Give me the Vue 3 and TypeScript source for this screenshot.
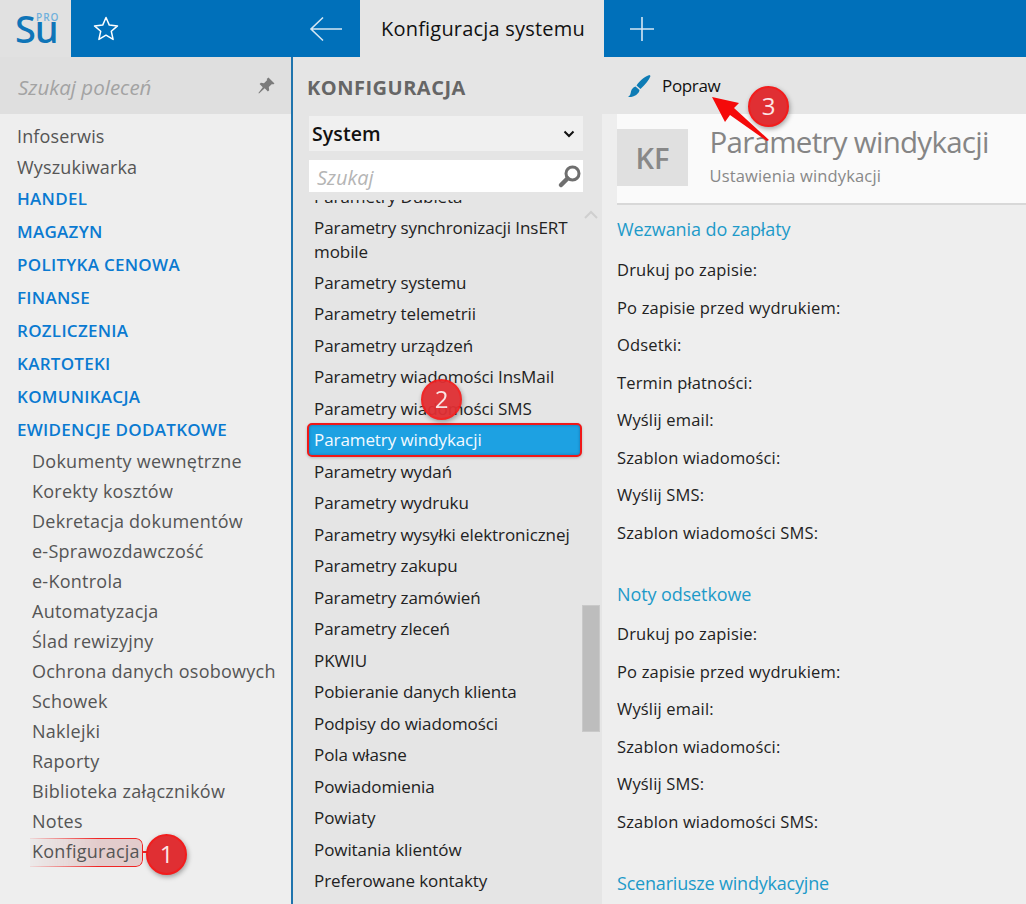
<script setup lang="ts">
const topItems = ['Infoserwis', 'Wyszukiwarka']
const groups = ['HANDEL', 'MAGAZYN', 'POLITYKA CENOWA', 'FINANSE', 'ROZLICZENIA', 'KARTOTEKI', 'KOMUNIKACJA', 'EWIDENCJE DODATKOWE']
const subItems = ['Dokumenty wewnętrzne', 'Korekty kosztów', 'Dekretacja dokumentów', 'e-Sprawozdawczość', 'e-Kontrola', 'Automatyzacja', 'Ślad rewizyjny', 'Ochrona danych osobowych', 'Schowek', 'Naklejki', 'Raporty', 'Biblioteka załączników', 'Notes']
const params = ['Parametry synchronizacji InsERT mobile', 'Parametry systemu', 'Parametry telemetrii', 'Parametry urządzeń', 'Parametry wiadomości InsMail', 'Parametry wiadomości SMS', 'Parametry windykacji', 'Parametry wydań', 'Parametry wydruku', 'Parametry wysyłki elektronicznej', 'Parametry zakupu', 'Parametry zamówień', 'Parametry zleceń', 'PKWIU', 'Pobieranie danych klienta', 'Podpisy do wiadomości', 'Pola własne', 'Powiadomienia', 'Powiaty', 'Powitania klientów', 'Preferowane kontakty']
const section1 = ['Drukuj po zapisie:', 'Po zapisie przed wydrukiem:', 'Odsetki:', 'Termin płatności:', 'Wyślij email:', 'Szablon wiadomości:', 'Wyślij SMS:', 'Szablon wiadomości SMS:']
const section2 = ['Drukuj po zapisie:', 'Po zapisie przed wydrukiem:', 'Wyślij email:', 'Szablon wiadomości:', 'Wyślij SMS:', 'Szablon wiadomości SMS:']
</script>

<template>
  <div class="app">
    <header class="top">
      <div class="logo">
        <span class="su">Su</span><span class="pro">PRO</span>
      </div>
      <div class="star">
        <svg width="28" height="28" viewBox="0 0 28 28"><path d="M14 2.500l3.300 7.600 8.200.8-6.200 5.400 1.800 8.100-7.100-4.200-7.100 4.200 1.800-8.100-6.200-5.400 8.200-.8z" fill="none" stroke="#fff" stroke-width="1.500" stroke-linejoin="round"/></svg>
      </div>
      <div class="back">
        <svg width="34" height="26" viewBox="0 0 34 26"><path d="M14 1.500L2 13l12 11.500M2 13h31" fill="none" stroke="#d5e6f3" stroke-width="1.600"/></svg>
      </div>
      <div class="tab">Konfiguracja systemu</div>
      <div class="plus">
        <svg width="26" height="26" viewBox="0 0 26 26"><path d="M13 1v24M1 13h24" fill="none" stroke="#d5e6f3" stroke-width="1.600"/></svg>
      </div>
    </header>

    <div class="body">
      <aside class="left">
        <div class="cmd">
          <span class="cmd-ph">Szukaj poleceń</span>
          <svg class="pin" width="20" height="20" viewBox="0 0 20 20"><path d="M12.500 1.500l6 6-1.500 1-1-.6-3.200 3.200.4 3.200-1.300 1.200-3.200-3.200L3 17.500l-.6-.5 4.400-5.800-3.200-3.200 1.300-1.200 3.100.5 3.200-3.200-.5-1z" fill="#7b7b7b"/></svg>
        </div>
        <nav class="nav">
          <div v-for="t in topItems" :key="t" class="nav-top">{{ t }}</div>
          <div v-for="(g, i) in groups" :key="g" class="nav-group" :class="{ firstg: i === 0 }">{{ g }}</div>
          <div class="subs">
            <div v-for="s in subItems" :key="s" class="nav-sub">{{ s }}</div>
            <div class="nav-sub konf"><span class="konf-mark"></span><span class="konf-text">Konfiguracja</span><span class="konf-tick"></span></div>
          </div>
        </nav>
      </aside>

      <section class="mid">
        <div class="mid-title">KONFIGURACJA</div>
        <div class="select">
          <span>System</span>
          <svg width="12" height="8" viewBox="0 0 12 8"><path d="M1.500 1.500L6 6l4.500-4.500" fill="none" stroke="#111" stroke-width="2"/></svg>
        </div>
        <div class="search">
          <span>Szukaj</span>
          <svg width="26" height="26" viewBox="0 0 26 26"><circle cx="15.500" cy="10.500" r="6.500" fill="#fff" stroke="#6f6f6f" stroke-width="3"/><path d="M10.500 15.500L4 22" stroke="#6f6f6f" stroke-width="4.500" stroke-linecap="round"/></svg>
        </div>
        <div class="list">
          <div class="clipped">Parametry Dubieta</div>
          <div v-for="p in params" :key="p" class="item" :class="{ active: p === 'Parametry windykacji', two: p.endsWith('mobile') }">{{ p }}</div>
          <svg class="sb-up" width="14" height="9" viewBox="0 0 14 9"><path d="M1 8l6-6 6 6" fill="none" stroke="#cfcfcf" stroke-width="2"/></svg>
          <div class="thumb"></div>
        </div>
      </section>

      <main class="right">
        <div class="toolbar">
          <svg width="24" height="24" viewBox="0 0 24 24"><path d="M22.500 1C19 2 13 6 9.500 11.500L13.500 15C18 11 22 6 23.500 2zM8.500 12.500L12.500 16C12 20 7 23.500 1 23c2.500-1.500 2.500-3.500 3-5.500.5-2.500 2-4 4.500-5z" fill="#0e7cb5"/></svg>
          <span>Popraw</span>
        </div>
        <div class="content">
          <div class="card">
            <div class="kf">KF</div>
            <div class="card-text">
              <div class="h1">Parametry windykacji</div>
              <div class="h2">Ustawienia windykacji</div>
            </div>
          </div>
          <div class="sec-title first">Wezwania do zapłaty</div>
          <div v-for="r in section1" :key="'a' + r" class="row">{{ r }}</div>
          <div class="sec-title second">Noty odsetkowe</div>
          <div v-for="r in section2" :key="'b' + r" class="row">{{ r }}</div>
          <div class="sec-title third">Scenariusze windykacyjne</div>
        </div>
      </main>
    </div>

    <svg class="arrow" width="70" height="60" viewBox="0 0 70 60"><path d="M2 2L29 8l-5 5 35 32-2 1L20 20l-5 7z" fill="#f50a0a"/></svg>
    <div class="badge b1">1</div>
    <div class="badge b2">2</div>
    <div class="badge b3">3</div>
  </div>
</template>

<style>
html, body { margin: 0; padding: 0; background: #eee; overflow: hidden; }
</style>

<style scoped>
.app { position: relative; width: 1026px; height: 904px; overflow: hidden; font-family: "Open Sans", "Noto Sans", sans-serif; font-size: 16px; color: #333; }
.top { height: 57px; background: #0070ba; display: flex; }
.logo { width: 71px; background: #e1e1e1; position: relative; }
.su { position: absolute; left: 15px; top: 3px; font-size: 38px; line-height: 50px; font-weight: 500; color: #0f75b8; letter-spacing: -1.200px; font-family: "Noto Sans", sans-serif; }
.pro { position: absolute; left: 36px; top: 12px; font-size: 10px; line-height: 11px; color: #6fb0dc; font-weight: 600; letter-spacing: 1px; }
.star { width: 69px; display: flex; align-items: center; justify-content: center; }
.back { width: 220px; display: flex; align-items: center; justify-content: flex-end; padding-right: 17px; box-sizing: border-box; }
.tab { width: 244px; background: #e5e5e5; color: #111; font-size: 20px; font-weight: 500; display: flex; align-items: center; padding-left: 21px; box-sizing: border-box; letter-spacing: .2px; }
.plus { width: 75px; display: flex; align-items: center; justify-content: center; }
.body { height: 847px; display: flex; }
.left { width: 291px; background: #eee; border-right: 2px solid #1f74ad; flex: none; }
.cmd { height: 57px; background: #dfdfdf; display: flex; align-items: center; justify-content: space-between; padding: 0 15px 0 18px; }
.cmd-ph { font-style: italic; font-size: 20.500px; color: #a3a3a3; margin-top: 3px; }
.nav { padding-top: 7px; }
.nav-top { height: 31px; line-height: 31px; padding-left: 17px; font-size: 18px; color: #555; letter-spacing: .15px; }
.nav-group { height: 33px; line-height: 33px; padding-left: 17px; font-size: 17px; font-weight: 600; color: #0a7ad1; letter-spacing: .28px; }
.firstg { margin-top: -1.500px; }
.subs { padding-top: .5px; }
.nav-sub { height: 30px; line-height: 30px; padding-left: 32px; font-size: 18px; color: #555; position: relative; letter-spacing: .25px; }
.konf-mark { position: absolute; left: 30px; top: 2px; width: 113px; height: 29px; border: 1.500px solid #f02525; border-left: 0; border-radius: 0 7px 7px 0; background: rgba(222,190,190,.7); box-sizing: border-box; -webkit-mask-image: linear-gradient(90deg, rgba(0,0,0,.1), #000 60%); mask-image: linear-gradient(90deg, rgba(0,0,0,.1), #000 60%); }
.konf-text { position: relative; }
.konf-tick { position: absolute; left: 143px; top: 15px; width: 5px; height: 1.500px; background: #f02525; }
.mid { width: 309px; background: #e5e5e5; flex: none; position: relative; display: flex; flex-direction: column; }
.mid-title { height: 59px; line-height: 61px; padding-left: 14px; font-size: 20px; font-weight: 700; color: #666; letter-spacing: .5px; box-sizing: border-box; }
.select { margin-left: 16px; width: 274px; height: 35px; background: #f0f0f0; display: flex; align-items: center; justify-content: space-between; padding: 0 8px 0 3px; box-sizing: border-box; font-size: 19.500px; font-weight: 600; color: #111; letter-spacing: .1px; }
.search { margin: 9px 0 0 16px; width: 274px; height: 32px; background: #fff; display: flex; align-items: center; justify-content: space-between; padding: 0 0 0 8px; box-sizing: border-box; font-style: italic; font-size: 20px; color: #b5b5b5; }
.search span { margin-top: 2px; }
.list { position: relative; flex: 1; overflow: hidden; margin-top: 8px; padding-left: 21px; letter-spacing: -.08px; }
.clipped { height: 31.500px; margin-top: -19.500px; line-height: 31.500px; font-size: 17px; color: #222; }
.item { height: 31.500px; line-height: 31.500px; font-size: 17px; color: #222; width: 262px; }
.item.two { height: 54.500px; line-height: 24px; padding-top: 4px; box-sizing: border-box; }
.item.active { position: relative; margin: -1px 0 -1px -7px; width: 275px; height: 33.500px; line-height: 30px; box-sizing: border-box; background: #1da1e2; color: #f4faff; border: 2px solid #f01818; border-radius: 5px; padding-left: 5px; box-shadow: inset 0 0 3px rgba(0,60,110,.45), 0 1px 3px rgba(0,0,0,.2); }
.sb-up { position: absolute; left: 291px; top: 10px; }
.thumb { position: absolute; left: 289px; top: 405px; width: 18px; height: 127px; background: #bdbdbd; border: 1px solid #c9c9c9; box-sizing: border-box; }
.right { flex: 1; min-width: 0; }
.toolbar { height: 57px; background: #e5e5e5; display: flex; align-items: center; gap: 11px; padding-left: 25px; font-size: 17px; color: #111; letter-spacing: -.35px; }
.toolbar svg { margin-top: 1px; }
.toolbar span { margin-top: -1px; }
.content { height: 790px; background: #eee; padding-left: 15px; overflow: hidden; }
.card { height: 91px; background: #fafafa; border-bottom: 2px solid #d8d8d8; box-sizing: border-box; display: flex; align-items: flex-start; padding-top: 15px; }
.kf { width: 71px; height: 57px; background: #e0e0e0; color: #888; font-size: 29px; font-weight: 600; line-height: 57px; text-align: center; }
.card-text { margin-left: 21.500px; }
.h1 { font-size: 29.500px; line-height: 28px; color: #858585; letter-spacing: -.72px; margin-top: -1px; }
.h2 { font-size: 16.500px; line-height: 22px; margin-top: 9px; color: #888; letter-spacing: .15px; }
.sec-title { font-size: 18px; color: #1d9ac9; line-height: 24px; letter-spacing: -.1px; }
.first { margin-top: 12px; margin-bottom: 10px; }
.second { margin-top: 31px; margin-bottom: 9px; }
.third { margin-top: 31px; letter-spacing: -.2px; }
.row { height: 37.500px; line-height: 37.500px; font-size: 16.500px; color: #222; letter-spacing: .17px; }
.badge { position: absolute; width: 41px; height: 41px; border-radius: 50%; background: #e02f33; border: 2.500px solid #f21d1d; box-sizing: border-box; color: #fbe6e6; font-size: 24px; line-height: 35px; text-align: center; box-shadow: 1px 2px 5px rgba(0,0,0,.35); }
.b1 { left: 146px; top: 834px; }
.b2 { left: 421px; top: 379px; opacity: .95; }
.b3 { left: 748px; top: 86px; }
.arrow { position: absolute; left: 710px; top: 95px; }
</style>
